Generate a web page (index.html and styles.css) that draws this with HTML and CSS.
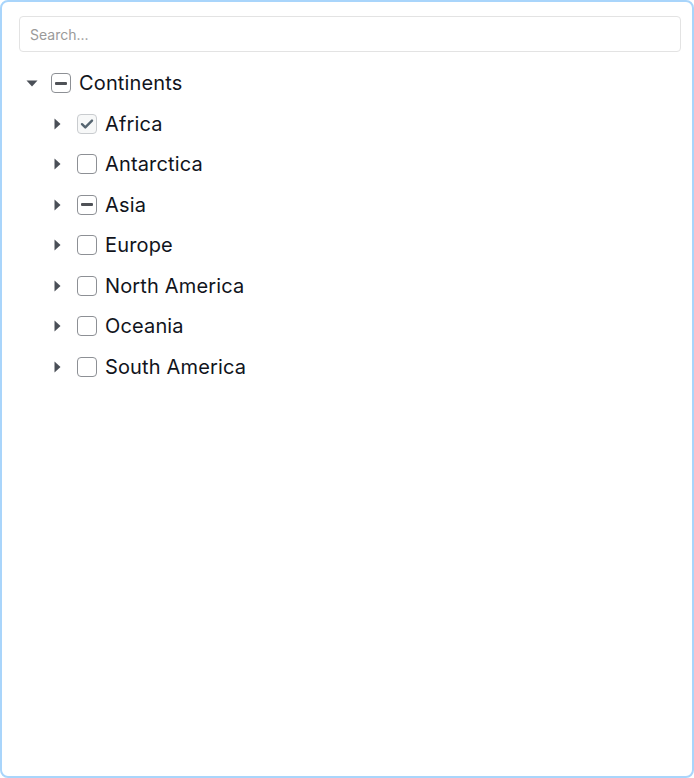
FILE: index.html
```html
<!DOCTYPE html>
<html>
<head>
<meta charset="utf-8">
<link rel="stylesheet" href="styles.css">
</head>
<body>
<div class="panel">
  <input class="search" type="text" placeholder="Search...">
  <ul class="tree">
    <li class="row">
      <span class="caret open"><svg width="12" height="8" viewBox="0 0 12 8"><path d="M0.5 1.5 L11.5 1.5 L6 7.5 Z" fill="#4a4f57"/></svg></span>
      <span class="box"><span class="dash"></span></span>
      <span class="label">Continents</span>
    </li>
    <li class="row child">
      <span class="caret"><svg width="8" height="12" viewBox="0 0 8 12"><path d="M1.5 0.5 L7.5 6 L1.5 11.5 Z" fill="#4a4f57"/></svg></span>
      <span class="box checked"><svg width="16" height="16" viewBox="0 0 16 16"><path d="M3 8.2 L6.3 11.4 L13 4.6" fill="none" stroke="#566570" stroke-width="2.4" stroke-linecap="round" stroke-linejoin="round"/></svg></span>
      <span class="label">Africa</span>
    </li>
    <li class="row child">
      <span class="caret"><svg width="8" height="12" viewBox="0 0 8 12"><path d="M1.5 0.5 L7.5 6 L1.5 11.5 Z" fill="#4a4f57"/></svg></span>
      <span class="box"></span>
      <span class="label">Antarctica</span>
    </li>
    <li class="row child">
      <span class="caret"><svg width="8" height="12" viewBox="0 0 8 12"><path d="M1.5 0.5 L7.5 6 L1.5 11.5 Z" fill="#4a4f57"/></svg></span>
      <span class="box"><span class="dash"></span></span>
      <span class="label">Asia</span>
    </li>
    <li class="row child">
      <span class="caret"><svg width="8" height="12" viewBox="0 0 8 12"><path d="M1.5 0.5 L7.5 6 L1.5 11.5 Z" fill="#4a4f57"/></svg></span>
      <span class="box"></span>
      <span class="label">Europe</span>
    </li>
    <li class="row child">
      <span class="caret"><svg width="8" height="12" viewBox="0 0 8 12"><path d="M1.5 0.5 L7.5 6 L1.5 11.5 Z" fill="#4a4f57"/></svg></span>
      <span class="box"></span>
      <span class="label">North America</span>
    </li>
    <li class="row child">
      <span class="caret"><svg width="8" height="12" viewBox="0 0 8 12"><path d="M1.5 0.5 L7.5 6 L1.5 11.5 Z" fill="#4a4f57"/></svg></span>
      <span class="box"></span>
      <span class="label">Oceania</span>
    </li>
    <li class="row child">
      <span class="caret"><svg width="8" height="12" viewBox="0 0 8 12"><path d="M1.5 0.5 L7.5 6 L1.5 11.5 Z" fill="#4a4f57"/></svg></span>
      <span class="box"></span>
      <span class="label">South America</span>
    </li>
  </ul>
</div>
</body>
</html>
```
FILE: styles.css
```css
html, body {
  margin: 0;
  padding: 0;
  background: #ffffff;
}
body {
  font-family: Inter, "Noto Sans", sans-serif;
}
.panel {
  box-sizing: border-box;
  width: 694px;
  height: 778px;
  border: 2px solid #a9d5fb;
  border-radius: 8px;
  padding: 14px 11px 0 17px;
}
.search {
  box-sizing: border-box;
  display: block;
  width: 100%;
  height: 36px;
  border: 1px solid #e3e3e3;
  border-radius: 4px;
  padding: 0 10px;
  font-family: Inter, "Noto Sans", sans-serif;
  font-size: 14px;
  color: #333;
  outline: none;
}
.search::placeholder {
  color: #9a9a9a;
}
.tree {
  list-style: none;
  margin: 11px 0 0 0;
  padding: 0;
}
.row {
  display: flex;
  align-items: center;
  height: 40.5px;
  padding-left: 6px;
}
.row.child {
  padding-left: 32px;
}
.caret {
  display: flex;
  align-items: center;
  justify-content: center;
  width: 14px;
  height: 14px;
  margin-right: 12px;
}
.row.child .caret {
  width: 8px;
  margin-left: 2px;
  margin-right: 16px;
}
.box {
  box-sizing: border-box;
  width: 20px;
  height: 20px;
  border: 1.5px solid #8d9095;
  border-radius: 4px;
  display: flex;
  align-items: center;
  justify-content: center;
  margin-right: 8px;
  background: #fff;
}
.box.checked {
  border-color: #c9cccf;
  background: #f7f8f8;
}
.dash {
  width: 12px;
  height: 3px;
  border-radius: 1px;
  background: #4f5257;
}
.label {
  font-size: 20px;
  color: #11141c;
  line-height: 24px;
  letter-spacing: 0.15px;
}
```
